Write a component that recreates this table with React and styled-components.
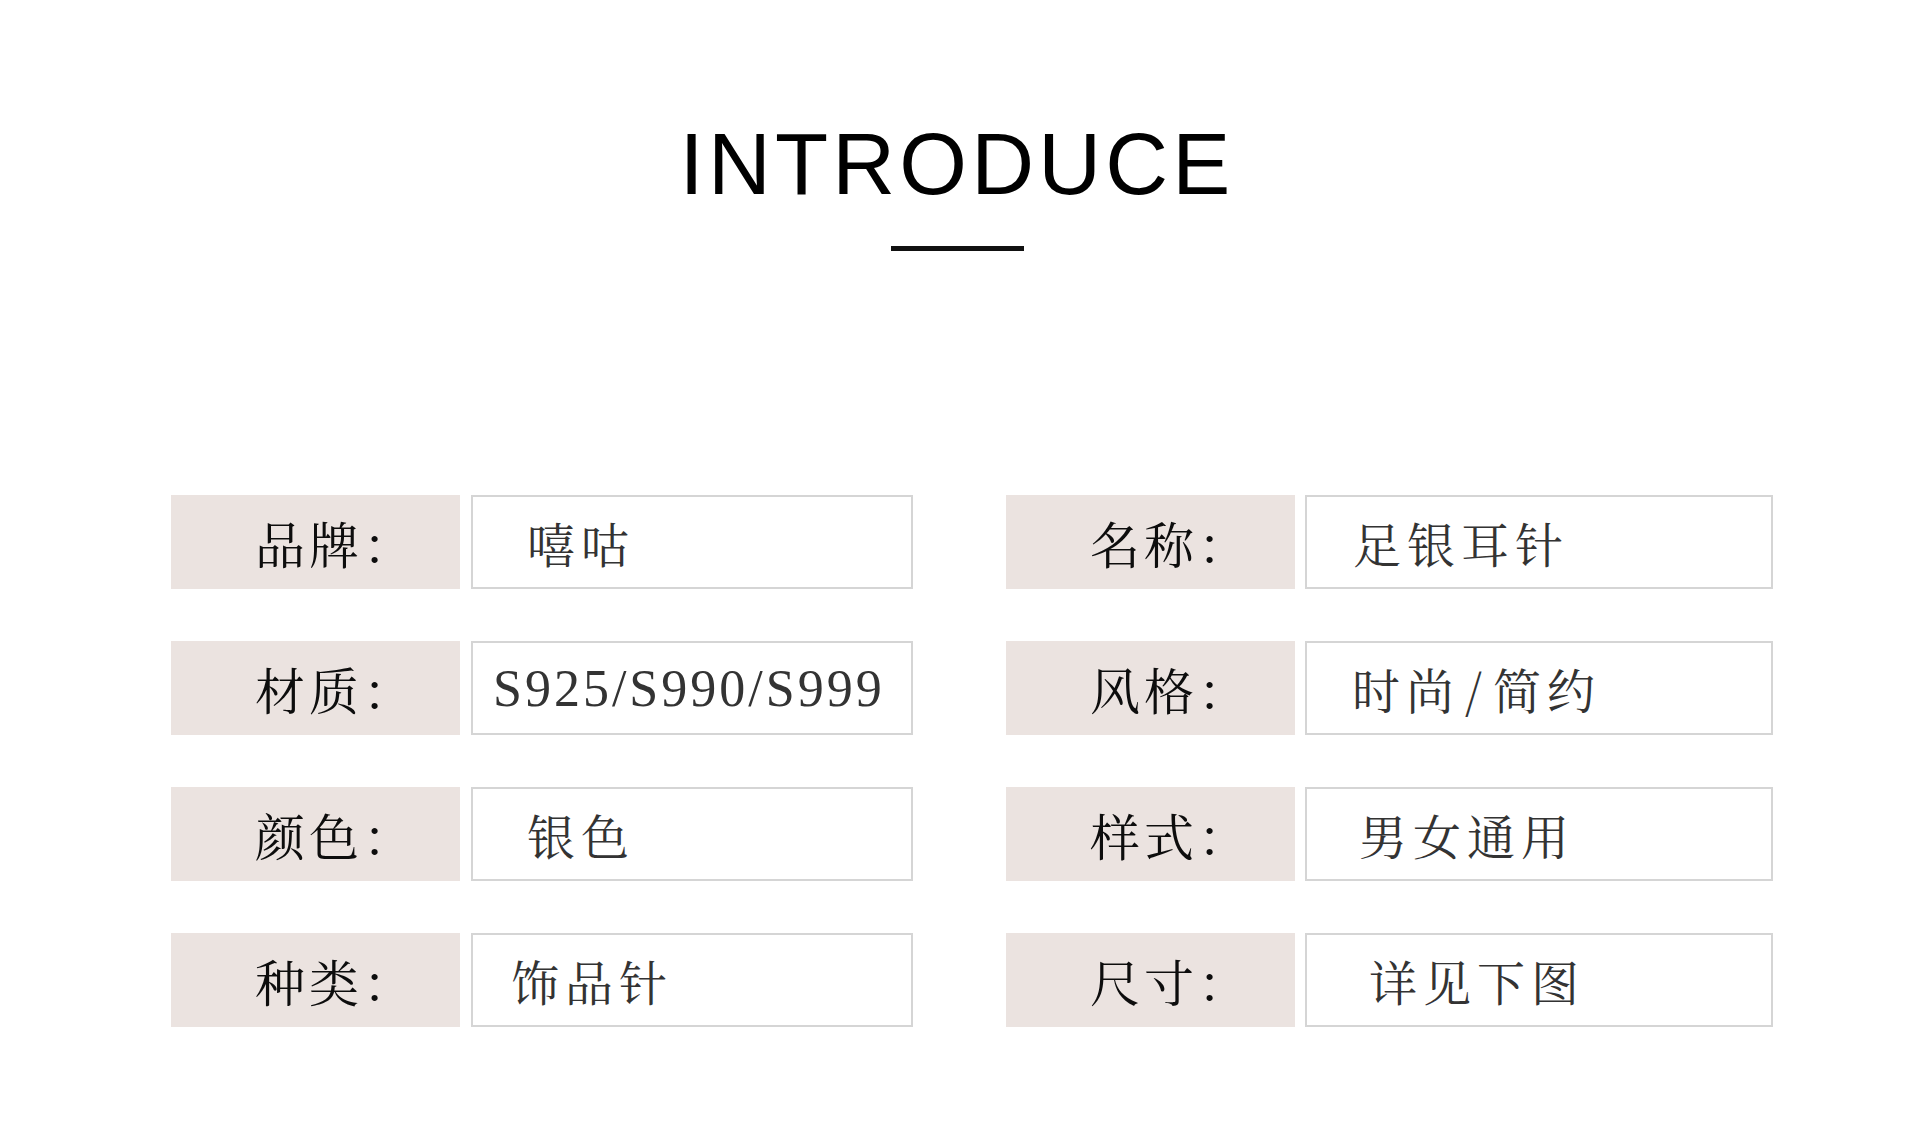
import React from "react";
import styled, { createGlobalStyle } from "styled-components";

const GlobalStyle = createGlobalStyle`
  html, body {
    margin: 0;
    padding: 0;
    background: #ffffff;
  }
  body {
    font-family: "Liberation Sans", "Noto Sans CJK SC", sans-serif;
  }
`;

// value text; "/" gets a little extra air like the original artwork
const rows = [
  [
    { label: "品牌：", value: ["嘻咕"], indent: 54 },
    { label: "名称：", value: ["足银耳针"], indent: 46 },
  ],
  [
    { label: "材质：", value: ["S925/S990/S999"], indent: 20, latin: true },
    { label: "风格：", value: ["时尚", "简约"], indent: 45 },
  ],
  [
    { label: "颜色：", value: ["银色"], indent: 54 },
    { label: "样式：", value: ["男女通用"], indent: 52 },
  ],
  [
    { label: "种类：", value: ["饰品针"], indent: 38 },
    { label: "尺寸：", value: ["详见下图"], indent: 62 },
  ],
];

export default function App() {
  return (
    <Page>
      <GlobalStyle />
      <Header>
        <Title>INTRODUCE</Title>
        <Rule />
      </Header>

      <Table>
        {rows.map((row, i) =>
          row.map((cell, j) => (
            <Pair key={i + "-" + j} $wide={j === 1}>
              <Label>{cell.label}</Label>
              <Value $indent={cell.indent} $latin={cell.latin}>
                {cell.value.map((part, k) => (
                  <React.Fragment key={k}>
                    {k > 0 && <Slash>/</Slash>}
                    {part}
                  </React.Fragment>
                ))}
              </Value>
            </Pair>
          ))
        )}
      </Table>
    </Page>
  );
}

const Page = styled.div`
  width: 1920px;
  min-height: 1146px;
  background: #fff;
`;

const Header = styled.header`
  display: flex;
  flex-direction: column;
  align-items: center;
  padding-top: 120px;
`;

const Title = styled.h1`
  margin: 0 6px 0 0;
  font-family: "Liberation Sans", Arial, sans-serif;
  font-weight: 400;
  font-size: 87px;
  line-height: 87px;
  letter-spacing: 4.2px;
  color: #000;
`;

const Rule = styled.div`
  width: 133px;
  height: 5px;
  margin-top: 39px;
  margin-right: 6px;
  background: #111;
`;

const Table = styled.section`
  display: grid;
  grid-template-columns: 742px 767px;
  column-gap: 93px;
  row-gap: 52px;
  padding-left: 171px;
  margin-top: 244px;
`;

const Pair = styled.div`
  display: flex;
  gap: ${(p) => (p.$wide ? 10 : 11)}px;
  height: 94px;
`;

const Label = styled.div`
  flex: 0 0 289px;
  display: flex;
  align-items: center;
  padding-left: 84px;
  box-sizing: border-box;
  background: #ebe3e0;
  color: #0d0d0d;
  font-family: "Noto Serif CJK SC", "Noto Sans CJK SC", serif;
  font-size: 50px;
  letter-spacing: 4px;
`;

const Value = styled.div`
  flex: 1;
  display: flex;
  align-items: center;
  box-sizing: border-box;
  border: 2px solid #d5d5d5;
  background: #fff;
  padding-left: ${(p) => p.$indent}px;
  color: #333;
  white-space: nowrap;
  font-family: ${(p) =>
    p.$latin
      ? `"Liberation Serif", "Noto Serif CJK SC", serif`
      : `"Noto Serif CJK SC", "Noto Sans CJK SC", serif`};
  font-size: ${(p) => (p.$latin ? 52 : 48)}px;
  letter-spacing: ${(p) => (p.$latin ? 3 : 6)}px;
`;

const Slash = styled.span`
  margin: 0 5px;
`;
